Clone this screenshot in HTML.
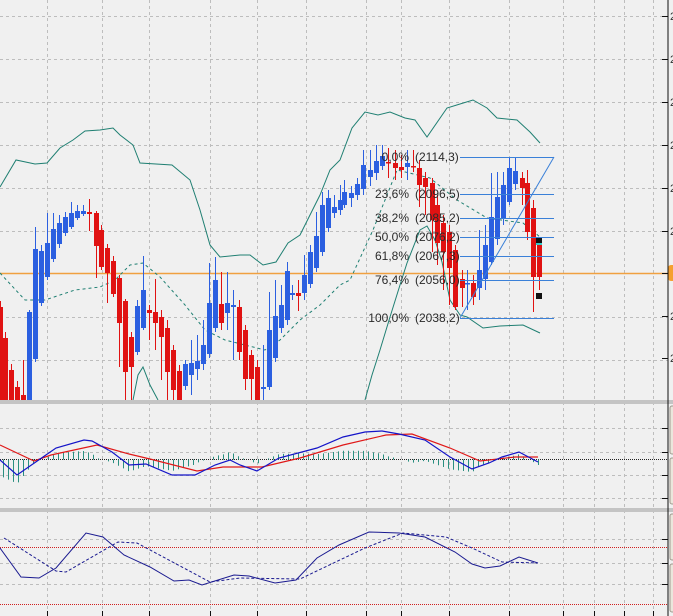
<!DOCTYPE html><html><head><meta charset="utf-8"><style>
html,body{margin:0;padding:0;background:#f0f0f0;overflow:hidden}
svg{display:block}
text{font-family:"Liberation Sans",sans-serif;font-size:11px;fill:#333}
#fibt text{font-size:12px;fill:#2a2a2a}
</style></head><body>
<svg id="s" width="673" height="616" xmlns="http://www.w3.org/2000/svg">
<rect width="673" height="616" fill="#f0f0f0"/>
<g id="grid" stroke="#bdbdbd" stroke-dasharray="3,3" stroke-width="1"></g>
<line x1="0" y1="273.5" x2="668" y2="273.5" stroke="#f0a040" stroke-width="1.5"/>
<rect x="668" y="265" width="8" height="16" rx="3" fill="#f5a030"/>
<polyline fill="none" stroke="#1f7f72" stroke-width="1" points="0,187 16,160 35,164 47,163 60,148 73,140 85,131 100,130 113,128 120,135 133,145 140,163 172,165 190,180 200,210 210,245 220,257 240,255 250,255 263,265 276,262 288,243 300,235 320,195 330,170 340,160 352,128 365,112 378,115 390,112 405,118 415,120 427,137 447,108 460,104 473,100 487,108 497,118 517,120 530,132 540,143"/>
<polyline fill="none" stroke="#1f7f72" stroke-width="1" points="133,400 138,375 143,367 150,385 158,400"/>
<polyline fill="none" stroke="#1f7f72" stroke-width="1" points="365,400 372,375 380,350 390,317 400,285 407,263 420,230 427,226 435,240 442,262 450,300 460,315 467,317 483,328 500,326 523,325 540,333"/>
<polyline fill="none" stroke="#1f7f72" stroke-width="1" stroke-dasharray="3,3" points="0,273 25,300 45,300 75,290 100,287 115,280 130,265 143,263 160,277 185,305 205,330 225,340 245,345 265,350 280,340 300,320 320,305 340,285 350,280 373,230 397,170 430,178 457,200 487,218 523,223 540,237"/>
<g id="candles"></g>
<g stroke="#3a80d8" stroke-width="1" id="fib"></g>
<line x1="460" y1="318" x2="554" y2="157" stroke="#3a80d8"/>
<g id="fibt"></g>
<rect x="536" y="238" width="6" height="6" fill="#111"/><rect x="536" y="243" width="6" height="2" fill="#3cc"/>
<rect x="536" y="293" width="6" height="6" fill="#111"/>
<rect x="0" y="400" width="673" height="4" fill="#c4c4c4"/>
<rect x="0" y="508" width="673" height="4" fill="#c4c4c4"/>
<line x1="668" y1="0" x2="668" y2="616" stroke="#111"/>
<g id="ticks" stroke="#111"></g>
<line x1="0" y1="459.5" x2="668" y2="459.5" stroke="#222" stroke-dasharray="1,1"/>
<g id="hist" stroke="#2a8f80"></g>
<polyline fill="none" stroke="#e01818" stroke-width="1.2" points="0,445 34,461 51,455 97,445 129,454 150,459 197,471 223,467 262,467 300,458 343,445 386,435 412,434 450,448 480,461 515,457 538,457"/>
<polyline fill="none" stroke="#1414c8" stroke-width="1.2" points="0,460 17,475 43,457 56,448 84,440 92,441 112,452 129,465 146,464 172,475 195,475 215,465 230,460 240,465 257,471 279,458 317,448 343,437 365,432 382,431 399,434 425,440 450,457 472,469 489,463 502,457 519,452 538,462"/>
<line x1="0" y1="547.5" x2="668" y2="547.5" stroke="#d02020" stroke-dasharray="1,1"/>
<line x1="0" y1="604.5" x2="668" y2="604.5" stroke="#d02020" stroke-dasharray="1,1"/>
<polyline fill="none" stroke="#1a1a90" stroke-width="1" points="0,548 21,577 39,578 56,568 86,533 103,537 124,555 150,567 174,581 189,580 202,585 234,575 249,576 275,583 296,580 317,558 339,545 369,532 399,533 425,537 455,552 472,564 485,568 500,566 519,557 538,563"/>
<polyline fill="none" stroke="#1a1a90" stroke-width="1" stroke-dasharray="3,2" points="4,538 56,571 66,572 118,542 137,543 210,582 240,578 300,579 365,548 403,533 446,537 472,548 502,562 538,563"/>
<g fill="#ebe6dc" stroke="#a09a90"><rect x="670" y="406" width="8" height="48" rx="2"/><rect x="670" y="458" width="8" height="46" rx="2"/><rect x="670" y="514" width="8" height="46" rx="2"/><rect x="670" y="564" width="8" height="48" rx="2"/></g>
<g id="lab"></g>
</svg>
<script>
var NS="http://www.w3.org/2000/svg";
function el(p,t,a){var e=document.createElementNS(NS,t);for(var k in a)e.setAttribute(k,a[k]);p.appendChild(e);return e;}
var g=document.getElementById('grid');
var vx=[47,102,149,210,257,306,366,401,449,509,563,594,624,653];
vx.forEach(function(x){el(g,'line',{x1:x+.5,y1:0,x2:x+.5,y2:616});});
[16,59,102,145,188,231,317,360,428,452,475,498,539,563,584].forEach(function(y){el(g,'line',{x1:0,y1:y+.5,x2:668,y2:y+.5});});
var tk=document.getElementById('ticks'),lab=document.getElementById('lab');
[16,59,102,145,188,231,273,316,358,428,452,475,498,539,563,584].forEach(function(y){el(tk,'line',{x1:662,y1:y+.5,x2:668,y2:y+.5});});
[16,59,102,145,188,231,316,358].forEach(function(y){var t=el(lab,'text',{x:670,y:y+4});t.textContent='2';});
vx.forEach(function(x){el(tk,'line',{x1:x+.5,y1:611,x2:x+.5,y2:616});});
var B="#2b5fe0",R="#e01212";
var C=[[0,307,400,R],[5,338,400,R],[11,370,400,R],[17,387,400,R],[23,395,400,R,360,400],[29,312,400,B,310,400],[35,249,359,B,227,362],[41,251,303,B,245,306],[47,243,277,B,213,280],[53,229,259,B,213,262],[59,223,244,B,215,248],[65,217,233,B,212,236],[71,213,227,B,202,229],[77,211,218,B,205,220],[83,211,214,B,205,216],[89,212,214,R,199,231],[96,213,246,R,211,278],[101,230,267,R,225,270],[107,248,273,R,244,303],[113,261,294,R,256,297],[119,278,323,R,275,367],[125,301,372,R,299,400],[131,337,367,R,332,400],[137,306,352,B,300,355],[143,290,328,B,256,330],[149,310,313,R,305,340],[155,312,323,R,279,350],[161,317,337,R,310,380],[167,328,372,R,320,400],[173,350,390,R,345,400],[179,371,400,R,365,400],[185,364,386,B,360,390],[191,363,375,B,340,395],[197,361,369,B,335,380],[203,345,364,B,320,370],[209,303,354,B,263,358],[215,280,328,B,257,332],[221,304,323,R,272,330],[227,303,313,B,272,330],[233,305,307,B,290,360],[239,307,352,R,300,360],[245,330,379,R,325,390],[251,355,379,R,350,400],[257,367,400,R,360,400],[263,387,389,B,345,400],[269,330,387,B,292,390],[275,316,358,B,280,362],[281,305,328,B,285,333],[287,271,320,B,262,325],[292,293,295,B,285,300],[298,293,296,R,280,311],[304,275,293,B,255,300],[310,252,284,B,245,288],[316,236,268,B,212,272],[322,205,252,B,192,256],[328,198,228,B,190,232],[334,207,213,B,195,218],[340,200,210,B,185,215],[344,192,205,B,180,208],[351,193,198,B,186,207],[357,184,195,B,178,200],[363,165,189,B,150,195],[370,170,177,B,150,186],[376,161,173,B,145,180],[382,156,166,B,145,170],[388,162,163,R,148,178],[395,163,168,R,150,180],[401,167,170,R,155,178],[407,163,167,B,150,180],[413,166,167,R,150,172],[419,168,185,R,160,207],[425,178,187,R,172,215],[432,183,220,R,178,252],[437,205,243,R,195,265],[443,223,252,R,215,290],[449,232,268,R,225,305],[455,250,307,R,245,310],[462,279,288,R,270,307],[467,283,284,B,270,310],[473,283,297,R,275,305],[479,270,288,B,230,300],[485,245,279,B,225,290],[491,217,262,B,173,265],[497,197,239,B,172,245],[503,185,218,B,172,225],[509,168,202,B,158,205],[515,171,184,B,158,190],[522,178,188,R,172,205],[527,183,232,R,170,240],[533,208,277,R,200,312],[539,245,277,R,240,290]];
var cg=document.getElementById('candles');
C.forEach(function(c){var x=c[0],t=c[1],b=c[2],col=c[3],h=c[4]||t-6,l=c[5]||Math.min(400,b+6);
el(cg,'line',{x1:x+.5,y1:h,x2:x+.5,y2:Math.min(l,400),stroke:col});
el(cg,'rect',{x:x-2,y:t,width:5,height:Math.max(1.5,Math.min(b,400)-t),fill:col});});
var F=[[157,"0,0%","(2114,3)"],[194,"23,6%","(2096,5)"],[218,"38,2%","(2085,2)"],[237,"50,0%","(2076,2)"],[256,"61,8%","(2067,3)"],[280,"76,4%","(2056,0)"],[318,"100,0%","(2038,2)"]];
var fg=document.getElementById('fib'),ft=document.getElementById('fibt');
F.forEach(function(f){el(fg,'line',{x1:460,y1:f[0]+.5,x2:554,y2:f[0]+.5});
var a=el(ft,'text',{x:409,y:f[0]+4,'text-anchor':'end'});a.textContent=f[1];
var b=el(ft,'text',{x:415,y:f[0]+4});b.textContent=f[2];});
var bl=[[0,460],[17,475],[43,457],[56,448],[84,440],[92,441],[112,452],[129,465],[146,464],[172,475],[195,475],[215,465],[230,460],[240,465],[257,471],[279,458],[317,448],[343,437],[365,432],[382,431],[399,434],[425,440],[450,457],[472,469],[489,463],[502,457],[519,452],[538,462]];
var rd=[[0,445],[34,461],[51,455],[97,445],[129,454],[150,459],[197,471],[223,467],[262,467],[300,458],[343,445],[386,435],[412,434],[450,448],[480,461],[515,457],[538,457]];
function ip(a,x){for(var i=1;i<a.length;i++){if(x<=a[i][0]){var p=a[i-1],q=a[i];return p[1]+(q[1]-p[1])*(x-p[0])/(q[0]-p[0]);}}return a[a.length-1][1];}
var hg=document.getElementById('hist');
for(var x=3;x<=538;x+=5){var d=(ip(bl,x)-ip(rd,x))*1.1;if(Math.abs(d)<1)continue;el(hg,'line',{x1:x+.5,y1:459.5,x2:x+.5,y2:459.5+d});}
</script>
</body></html>
